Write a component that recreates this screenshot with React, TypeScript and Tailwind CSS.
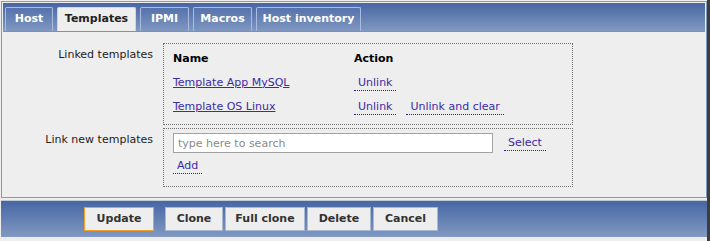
const font = { fontFamily: '"DejaVu Sans", Verdana, sans-serif' };

const tabs = [
  { label: "Host", w: "w-[48px]" },
  { label: "Templates", w: "w-[79px]", active: true },
  { label: "IPMI", w: "w-[49px]" },
  { label: "Macros", w: "w-[59px]" },
  { label: "Host inventory", w: "w-[105px]" },
];

function DotLink({ children }: { children: React.ReactNode }) {
  return (
    <a className="border-b border-dotted border-[#2a1fa0] px-[4px] leading-[15px] text-[#3b2ba6] cursor-pointer">
      {children}
    </a>
  );
}

function Btn({ label, w, primary }: { label: string; w: string; primary?: boolean }) {
  return (
    <button
      className={`${w} h-[24px] bg-[#eeeeee] text-[11px] font-bold text-[#333] ${
        primary ? "border border-[#f4a12c]" : "border border-[#a8b9d4]"
      }`}
    >
      {label}
    </button>
  );
}

export default function App() {
  return (
    <div className="flex h-[241px] w-[710px] bg-[#eeeeee] text-[11px] text-[#222]" style={font}>
      <div className="flex w-[707px] flex-col pl-[1px] pt-[1px]">
        {/* top form panel */}
        <div className="h-[197px] border border-[#7f9cbf] p-[1px]">
          <div className="flex h-[29px] gap-[4px] border-b border-[#8a8f99] bg-gradient-to-b from-[#4766a3] to-[#8198c2] pl-[2px] pt-[4px]">
            {tabs.map((t) => (
              <div
                key={t.label}
                className={`${t.w} flex h-[24px] items-center justify-center rounded-t-[2px] border border-b-0 text-[11px] font-bold ${
                  t.active
                    ? "border-[#c9d4e6] bg-[#eeeeee] text-[#222]"
                    : "border-[#a9bde0] bg-gradient-to-b from-[#5573ad] to-[#7f96c0] text-white"
                }`}
              >
                {t.label}
              </div>
            ))}
          </div>

          <div className="flex flex-col gap-[3px] pt-[11px]">
            <div className="flex">
              <div className="w-[150px] pt-[4px] text-right">Linked templates</div>
              <div className="ml-[10px] h-[82px] w-[410px] border border-dotted border-[#6f6f6f] pl-[9px] pt-[7px]">
                <div className="flex h-[16px] items-center font-bold text-black">
                  <div className="w-[181px]">Name</div>
                  <div>Action</div>
                </div>
                <div className="mt-[8px] flex h-[16px] items-center">
                  <a className="w-[181px] text-[#3b2ba6] underline">Template App MySQL</a>
                  <DotLink>Unlink</DotLink>
                </div>
                <div className="mt-[8px] flex h-[16px] items-center">
                  <a className="w-[181px] text-[#3b2ba6] underline">Template OS Linux</a>
                  <DotLink>Unlink</DotLink>
                  <span className="w-[10px]" />
                  <DotLink>Unlink and clear</DotLink>
                </div>
              </div>
            </div>
            <div className="flex">
              <div className="w-[150px] pt-[4px] text-right">Link new templates</div>
              <div className="ml-[10px] h-[59px] w-[410px] border border-dotted border-[#6f6f6f] pl-[9px] pt-[4px]">
                <div className="flex items-center">
                  <input
                    className="h-[20px] w-[320px] border border-[#a3a3a3] bg-white px-[4px] text-[11px] outline-none placeholder:text-[#8a8a8a]"
                    placeholder="type here to search"
                  />
                  <span className="w-[11px]" />
                  <DotLink>Select</DotLink>
                </div>
                <div className="mt-[5px] flex">
                  <DotLink>Add</DotLink>
                </div>
              </div>
            </div>
          </div>
        </div>

        {/* bottom button bar */}
        <div className="mt-[2px] flex h-[37px] items-center border-t border-[#c3cad6] bg-gradient-to-b from-[#4766a3] to-[#8199c2] pl-[83px]">
          <Btn label="Update" w="w-[70px]" primary />
          <div className="ml-[11px] flex gap-[2px]">
            <Btn label="Clone" w="w-[58px]" />
            <Btn label="Full clone" w="w-[80px]" />
            <Btn label="Delete" w="w-[64px]" />
            <Btn label="Cancel" w="w-[65px]" />
          </div>
        </div>
      </div>
      <div className="ml-auto w-[3px] bg-[#3d3d3d]" />
    </div>
  );
}
